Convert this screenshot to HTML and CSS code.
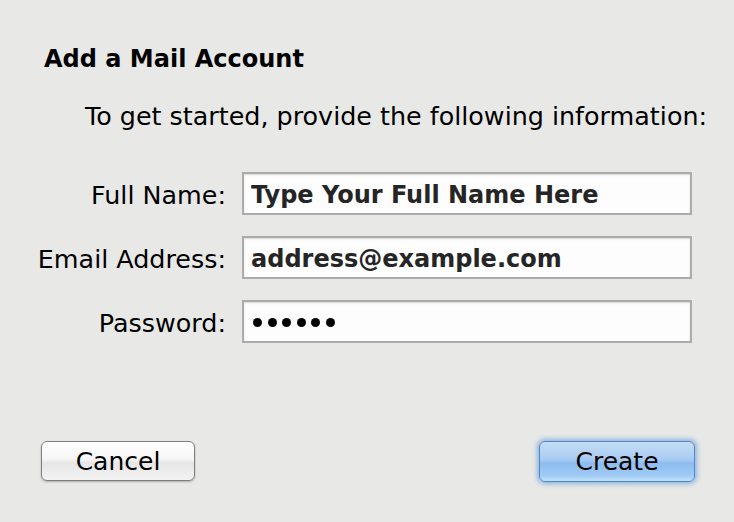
FILE: index.html
```html
<!DOCTYPE html>
<html lang="en">
<head>
  <meta charset="UTF-8" />
  <meta name="viewport" content="width=device-width, initial-scale=1" />
  <title>Add a Mail Account</title>
  <link rel="stylesheet" href="styles.css">
</head>
<body>
  <div class="sheet">
    <h1 class="sheet-title">Add a Mail Account</h1>
    <p class="intro">To get started, provide the following information:</p>

    <form class="account-form">
      <label for="fullName">Full Name:</label>
      <input type="text" id="fullName" value="Type Your Full Name Here" />

      <label for="email">Email Address:</label>
      <input type="text" id="email" value="address@example.com" />

      <label for="password">Password:</label>
      <div class="field password-field" id="password">
        <span class="dot"></span><span class="dot"></span><span class="dot"></span><span class="dot"></span><span class="dot"></span><span class="dot"></span>
      </div>
    </form>

    <div class="actions">
      <button type="button" class="btn">Cancel</button>
      <button type="button" class="btn btn-default">Create</button>
    </div>
  </div>
</body>
</html>
```

FILE: styles.css
```css
body {
  margin: 0;
  background: #e8e9e7;
  font-family: "DejaVu Sans", "Lucida Grande", sans-serif;
  color: #000;
}
.sheet {
  width: 734px;
  height: 522px;
  box-sizing: border-box;
  padding: 44px 0 0 44px;
}
.sheet-title {
  margin: 0;
  font-size: 24px;
  font-weight: bold;
  line-height: 30px;
}
.intro {
  margin: 27px 0 0 41px;
  font-size: 25.4px;
  line-height: 30px;
}
.account-form {
  display: grid;
  grid-template-columns: 199px 450px;
  column-gap: 16px;
  row-gap: 21px;
  margin: 41px 0 0 -17px;
}
.account-form label {
  text-align: right;
  white-space: nowrap;
  font-size: 25.4px;
  align-self: center;
  padding-top: 2px;
}
.account-form input,
.field {
  height: 43px;
  box-sizing: border-box;
  border: 2px solid #ababab;
  background: #fdfdfd;
  box-shadow: inset 0 1px 2px rgba(0,0,0,0.15);
  padding: 2px 7px 0;
  margin: 0;
  font-family: inherit;
  font-size: 24px;
  font-weight: bold;
  color: #252525;
  outline: none;
}
.password-field {
  display: flex;
  align-items: center;
  gap: 5.5px;
  padding-left: 9px;
}
.dot {
  width: 9px;
  height: 9px;
  border-radius: 50%;
  background: #000;
}
.actions {
  display: flex;
  justify-content: space-between;
  width: 654px;
  margin: 98px 0 0 -3px;
}
.btn {
  width: 154px;
  height: 40px;
  border: 1px solid #7e7e7e;
  border-radius: 6px;
  background: linear-gradient(#ffffff 0%, #f6f6f6 45%, #e6e6e6 55%, #f3f3f3 100%);
  box-shadow: 0 1px 2px rgba(0,0,0,0.25);
  font-family: inherit;
  font-size: 25px;
  color: #000;
  padding: 0;
  cursor: pointer;
}
.btn-default {
  width: 156px;
  height: 41px;
  border-color: #5886c0;
  background: linear-gradient(#c4dcf6 0%, #a9cbf2 45%, #8dbcee 55%, #9fcaf5 85%, #c0e2fb 100%);
  box-shadow: 0 0 5px 2px rgba(90,150,225,0.65);
}
```
